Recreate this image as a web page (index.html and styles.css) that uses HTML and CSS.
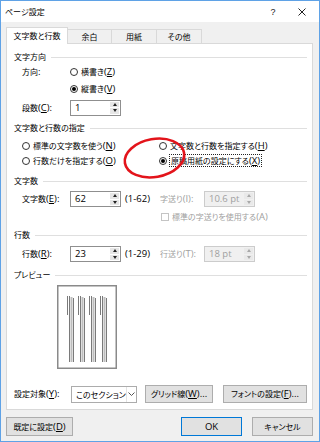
FILE: index.html
```html
<!DOCTYPE html>
<html lang="ja">
<head>
<meta charset="utf-8">
<title>ページ設定</title>
<link rel="stylesheet" href="styles.css">
</head>
<body>
<div class="win">
  <div class="titlebar">
    <span class="title">ページ設定</span>
    <span class="help">?</span>
    <svg class="close" width="8" height="8" viewBox="0 0 8 8"><path d="M0.5 0.5L7.5 7.5M7.5 0.5L0.5 7.5" stroke="#222" stroke-width="1" fill="none"/></svg>
  </div>
  <div class="body">
    <div class="tabs">
      <div class="tab active">文字数と行数</div>
      <div class="tab w44">余白</div>
      <div class="tab">用紙</div>
      <div class="tab">その他</div>
    </div>
    <div class="panel">
      <div class="gh"><span>文字方向</span><i></i></div>
      <div class="row h16"><span class="lbl">方向<span class="l">:</span></span><span class="radio"><b class="rb"></b>横書き<span class="l">(<u>Z</u>)</span></span></div>
      <div class="row h18"><span class="lbl"></span><span class="radio"><b class="rb on"></b>縦書き<span class="l">(<u>V</u>)</span></span></div>
      <div class="row h19"><span class="lbl">段数<span class="l">(<u>C</u>):</span></span>
        <div class="inp"><span class="v l">1</span><span class="spin"><b><i class="up"></i></b><b><i class="dn"></i></b></span></div>
      </div>

      <div class="gh m4"><span>文字数と行数の指定</span><i></i></div>
      <div class="row h15 m3">
        <span class="col1 radio"><b class="rb"></b>標準の文字数を使う<span class="l">(<u>N</u>)</span></span>
        <span class="radio"><b class="rb"></b>文字数と行数を指定する<span class="l">(<u>H</u>)</span></span>
      </div>
      <div class="row h15">
        <span class="col1 radio"><b class="rb"></b>行数だけを指定する<span class="l">(<u>O</u>)</span></span>
        <span class="radio"><b class="rb on"></b><span class="focus">原稿用紙の設定にする<span class="l">(<u>X</u>)</span></span></span>
      </div>

      <div class="gh m6"><span>文字数</span><i></i></div>
      <div class="row h18 m2"><span class="lbl">文字数<span class="l">(<u>E</u>):</span></span>
        <div class="inp"><span class="v l">62</span><span class="spin"><b><i class="up"></i></b><b><i class="dn"></i></b></span></div>
        <span class="rng l">(1-62)</span>
        <span class="lbl2">字送り<span class="l">(I):</span></span>
        <div class="inp dis"><span class="v l">10.6 pt</span><span class="spin"><b><i class="up"></i></b><b><i class="dn"></i></b></span></div>
      </div>
      <div class="chkrow h17"><b class="cb"></b>標準の字送りを使用する<span class="l">(A)</span></div>

      <div class="gh m3"><span>行数</span><i></i></div>
      <div class="row h18 m3"><span class="lbl">行数<span class="l">(<u>R</u>):</span></span>
        <div class="inp"><span class="v l">23</span><span class="spin"><b><i class="up"></i></b><b><i class="dn"></i></b></span></div>
        <span class="rng l">(1-29)</span>
        <span class="lbl2">行送り<span class="l">(T):</span></span>
        <div class="inp dis"><span class="v l">18 pt</span><span class="spin"><b><i class="up"></i></b><b><i class="dn"></i></b></span></div>
      </div>

      <div class="gh m5"><span>プレビュー</span><i></i></div>
      <div class="preview">
        <svg width="60" height="84" viewBox="0 0 60 84">
          <rect x="0.75" y="0.75" width="58.5" height="82.5" fill="#fff" stroke="#8a8a8a" stroke-width="1.5"/>
          <g stroke-width="1">
            <g transform="translate(10 0)">
              <path d="M0.5 11V30M2.5 11V77M6.5 13V77" stroke="#7a7a7a"/><path d="M4.5 12V77" stroke="#bdbdbd" stroke-width="2"/>
            </g>
            <g transform="translate(21 0)">
              <path d="M0.5 11V30M2.5 11V77M6.5 13V77" stroke="#7a7a7a"/><path d="M4.5 12V77" stroke="#bdbdbd" stroke-width="2"/>
            </g>
            <g transform="translate(32 0)">
              <path d="M0.5 11V30M2.5 11V77M6.5 13V77" stroke="#7a7a7a"/><path d="M4.5 12V77" stroke="#bdbdbd" stroke-width="2"/>
            </g>
            <g transform="translate(43 0)">
              <path d="M0.5 11V30M2.5 11V77M6.5 13V77" stroke="#7a7a7a"/><path d="M4.5 12V77" stroke="#bdbdbd" stroke-width="2"/>
            </g>
          </g>
        </svg>
      </div>

      <div class="brow">
        <span class="blbl">設定対象<span class="l">(<u>Y</u>):</span></span>
        <div class="sel"><span>このセクション</span><span class="arr"><svg width="7" height="4" viewBox="0 0 7 4"><path d="M0.5 0.5L3.5 3.5L6.5 0.5" stroke="#555" fill="none"/></svg></span></div>
        <div class="btn bg">グリッド線<span class="l">(<u>W</u>)...</span></div>
        <div class="btn bf">フォントの設定<span class="l">(<u>F</u>)...</span></div>
      </div>
    </div>
    <div class="foot">
      <div class="btn bd">既定に設定<span class="l">(<u>D</u>)</span></div>
      <div class="btn ok l">OK</div>
      <div class="btn cancel">キャンセル</div>
    </div>
  </div>
  <svg class="mark" width="70" height="48" viewBox="0 0 70 48"><ellipse cx="34.5" cy="24" rx="30" ry="19" transform="rotate(-10 34.5 24)" fill="none" stroke="#e3141b" stroke-width="2.6"/></svg>
</div>
</body>
</html>
```
FILE: styles.css
```css
* { box-sizing: border-box; margin: 0; padding: 0; }
html, body { width: 320px; height: 442px; overflow: hidden; background: #fff; }
body {
  font-family: "Noto Sans CJK JP", "Noto Sans", sans-serif;
  font-size: 8px;
  line-height: 10px;
  color: #000;
  font-feature-settings: "palt";
}
b, i { font-style: normal; font-weight: normal; }
u { text-decoration: underline; text-underline-offset: 1px; }
.l { font-family: "Open Sans", "Noto Sans", sans-serif; font-size: 9.5px; font-feature-settings: normal; }

.win {
  position: relative;
  width: 320px;
  height: 442px;
  border: 1px solid #5fa2e6;
  background: #f0f0f0;
  display: flex;
  flex-direction: column;
}
.titlebar {
  height: 21px;
  flex: none;
  background: #fff;
  display: flex;
  align-items: center;
  padding: 0 13px 0 4px;
}
.title { flex: 1; }
.help { width: 6px; text-align: center; margin-right: 22px; font-size: 9px; color: #222; font-family: "Liberation Sans", sans-serif; }
.close { display: block; }

.body { flex: 1; padding: 5px 6px 0 5px; }

.tabs { display: flex; align-items: flex-end; height: 16px; }
.tab {
  width: 45px;
  height: 14px;
  border: 1px solid #d9d9d9;
  border-left: none;
  border-bottom: none;
  background: #f0f0f0;
  display: flex;
  align-items: center;
  justify-content: center;
}
.tab.active {
  width: 62px;
  height: 17px;
  border-left: 1px solid #d9d9d9;
  background: #fff;
  margin-bottom: -1px;
  position: relative;
  z-index: 1;
}
.tab.w44 { width: 44px; }

.panel {
  height: 367px;
  background: #fff;
  border: 1px solid #d9d9d9;
  padding: 6px 5px 0 7px;
}
.gh { display: flex; align-items: center; height: 14px; }
.gh span { margin-right: 5px; }
.gh i { flex: 1; height: 1px; background: #dfdfdf; }

.m2 { margin-top: 2px; }
.m3 { margin-top: 3px; }
.m4 { margin-top: 4px; }
.m5 { margin-top: 5px; }
.m6 { margin-top: 6px; }
.h15 { height: 15px; }
.h16 { height: 16px; }
.h17 { height: 17px; }
.h18 { height: 18px; }
.h19 { height: 19px; }

.row { display: flex; align-items: center; padding-left: 8px; white-space: nowrap; }
.lbl { width: 48px; flex: none; }
.radio { display: flex; align-items: center; white-space: nowrap; }
.rb {
  width: 8px;
  height: 8px;
  border: 1px solid #333;
  border-radius: 50%;
  background: #fff;
  margin-right: 3px;
  display: flex;
  align-items: center;
  justify-content: center;
  flex: none;
}
.rb.on::after { content: ""; width: 4px; height: 4px; border-radius: 50%; background: #000; }
.col1 { width: 137px; flex: none; }
.focus { border: 1px dotted #222; padding: 0 1px; line-height: 11px; margin-left: -1px; }

.inp {
  width: 51px;
  height: 16px;
  border: 1px solid #8f8f8f;
  background: #fff;
  display: flex;
  flex: none;
}
.inp .v { flex: 1; padding-left: 4px; line-height: 14px; }
.spin { width: 10px; display: flex; flex-direction: column; gap: 1px; padding: 1px 1px 1px 0; }
.spin b { flex: 1; background: #e6e6e6; display: flex; align-items: center; justify-content: center; }
.up { width: 0; height: 0; border-left: 2px solid transparent; border-right: 2px solid transparent; border-bottom: 3px solid #222; }
.dn { width: 0; height: 0; border-left: 2px solid transparent; border-right: 2px solid transparent; border-top: 3px solid #222; }
.inp.dis { border-color: #cccccc; background: #f0f0f0; color: #a0a0a0; }
.inp.dis .spin b { background: #e9e9e9; }
.inp.dis .up { border-bottom-color: #a8a8a8; }
.inp.dis .dn { border-top-color: #a8a8a8; }
.rng { width: 39px; padding-left: 4px; flex: none; }
.lbl2 { width: 44px; flex: none; color: #a0a0a0; }

.chkrow { display: flex; align-items: center; padding-left: 147px; color: #a0a0a0; white-space: nowrap; }
.cb { width: 8px; height: 8px; border: 1px solid #c4c4c4; background: #fff; margin-right: 3px; flex: none; }

.preview { margin-top: 3px; margin-left: 43px; height: 84px; }
.preview svg { display: block; }

.brow { display: flex; align-items: center; height: 18px; margin-top: 16px; white-space: nowrap; }
.blbl { width: 57px; flex: none; }
.sel { width: 66px; height: 17px; border: 1px solid #acacac; background: #fff; display: flex; flex: none; }
.sel span:first-child { flex: 1; padding-left: 4px; line-height: 15px; }
.sel .arr { width: 13px; border-left: 1px solid #e3e3e3; display: flex; align-items: center; justify-content: center; }
.sel .arr svg { display: block; }

.btn {
  height: 18px;
  border: 1px solid #adadad;
  background: #e1e1e1;
  display: flex;
  align-items: center;
  justify-content: center;
  white-space: nowrap;
  flex: none;
}
.bg { width: 68px; margin-left: 8px; }
.bf { width: 84px; margin-left: 10px; }

.foot { display: flex; margin-top: 7px; }
.foot .btn { height: 19px; }
.bd { width: 67px; }
.ok { width: 61px; margin-left: auto; border-color: #0078d7; }
.cancel { width: 61px; margin-left: 10px; }

.mark { position: absolute; left: 119px; top: 133px; pointer-events: none; }
```
